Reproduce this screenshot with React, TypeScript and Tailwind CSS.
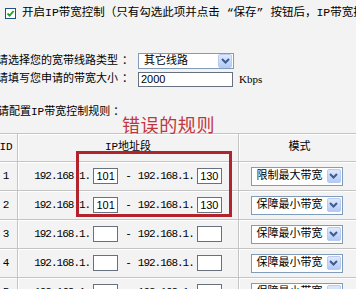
const FONT = "font-['Liberation_Mono','Noto_Sans_CJK_SC',monospace]";

const rows = [
  { id: 1, from: '101', to: '130', mode: '限制最大带宽' },
  { id: 2, from: '101', to: '130', mode: '保障最小带宽' },
  { id: 3, from: '', to: '', mode: '保障最小带宽' },
  { id: 4, from: '', to: '', mode: '保障最小带宽' },
  { id: 5, from: '', to: '', mode: '保障最小带宽' },
];

function DropArrow() {
  return (
    <span className="flex h-[14px] w-[14px] items-center justify-center rounded-[2px] border border-[#b7cbf3] bg-[linear-gradient(#dfe9fd,#b3caf7)]">
      <svg width="9" height="6" viewBox="0 0 9 6">
        <path d="M1 1 L4.5 4.5 L8 1" stroke="#3f5b8c" strokeWidth="2" fill="none" />
      </svg>
    </span>
  );
}

function Select({ value, className }: { value: string; className: string }) {
  return (
    <div className={`flex items-center justify-between border border-[#7f9db9] bg-white pl-[5px] pr-[1px] ${className}`}>
      <span className="text-[11px] leading-none text-black">{value}</span>
      <DropArrow />
    </div>
  );
}

function Box({ value }: { value: string }) {
  return (
    <span className="ml-[3px] flex h-[16px] w-[25px] items-center justify-center border border-[#66717d] bg-white font-['Liberation_Sans',sans-serif] text-[11px] leading-none tracking-normal text-black">
      {value}
    </span>
  );
}

export default function App() {
  return (
    <div className={`relative h-[289px] w-[356px] overflow-hidden bg-[#f3f3f3] text-black ${FONT}`}>
      <div className="flex h-[26px] items-center whitespace-nowrap pl-[5px]">
        <span className="flex h-[11px] w-[11px] items-center justify-center border border-[#1c5180] bg-white">
          <svg width="9" height="9" viewBox="0 0 9 9">
            <path d="M1.5 4.5 L3.6 6.6 L7.6 2" stroke="#21a121" strokeWidth="1.8" fill="none" />
          </svg>
        </span>
        <span className="ml-[6px] text-[11.5px] leading-none">
          开启IP带宽控制（只有勾选此项并点击 “保存” 按钮后，IP带宽控制规则才能生效）
        </span>
      </div>

      <div className="ml-[-3px] mt-[27px] flex h-[16px] items-center">
        <span className="w-[141px] text-[11px] leading-none">
          请选择您的宽带线路类型<span className="ml-[4px]">：</span>
        </span>
        <Select value="其它线路" className="h-[16px] w-[96px]" />
      </div>
      <div className="ml-[-3px] mt-[3px] flex h-[15px] items-center">
        <span className="w-[141px] text-[11px] leading-none">
          请填写您申请的带宽大小<span className="ml-[4px]">：</span>
        </span>
        <span className="flex h-[15px] w-[95px] items-center border border-[#66717d] bg-white pl-[2px] font-['Liberation_Sans',sans-serif] text-[11px] leading-none">
          2000
        </span>
        <span className="ml-[6px] font-['Liberation_Serif',serif] text-[11px] leading-none">Kbps</span>
      </div>

      <div className="ml-[-2px] mt-[18px] h-[14px] text-[11px] leading-[14px]">
        请配置IP带宽控制规则<span className="ml-[3px]">：</span>
      </div>

      <table className="ml-[-6px] mt-[14px] w-[366px] table-fixed border-collapse text-[11px]">
        <colgroup>
          <col className="w-[23px]" />
          <col className="w-[221px]" />
          <col className="w-[122px]" />
        </colgroup>
        <thead>
          <tr className="h-[28px]">
            <th className="border border-[#c4c4c4] text-center font-normal shadow-[inset_1px_1px_0_#fff]">ID</th>
            <th className="border border-[#c4c4c4] text-center font-normal shadow-[inset_1px_1px_0_#fff]">IP地址段</th>
            <th className="border border-[#c4c4c4] text-center font-normal shadow-[inset_1px_1px_0_#fff]">模式</th>
          </tr>
        </thead>
        <tbody>
          {rows.map((r) => (
            <tr key={r.id} className="h-[29px]">
              <td className="border border-[#c4c4c4] text-center shadow-[inset_1px_1px_0_#fff]">{r.id}</td>
              <td className="border border-[#c4c4c4] shadow-[inset_1px_1px_0_#fff]">
                <div className="flex items-center justify-center tracking-[-1px]">
                  <span>192.168.1.</span>
                  <Box value={r.from} />
                  <span className="mx-[7px]">-</span>
                  <span>192.168.1.</span>
                  <Box value={r.to} />
                </div>
              </td>
              <td className="border border-[#c4c4c4] shadow-[inset_1px_1px_0_#fff]">
                <div className="flex justify-center pr-[6px]">
                  <Select value={r.mode} className="h-[19px] w-[92px]" />
                </div>
              </td>
            </tr>
          ))}
        </tbody>
      </table>

      <div className="absolute left-[122px] top-[115px] font-['Noto_Sans_CJK_SC',sans-serif] text-[18px] leading-none tracking-[0.6px] text-[#c0363e]">
        错误的规则
      </div>
      <div className="absolute left-[76px] top-[151px] h-[66px] w-[156px] border-[3px] border-[#b3232b]" />
    </div>
  );
}
